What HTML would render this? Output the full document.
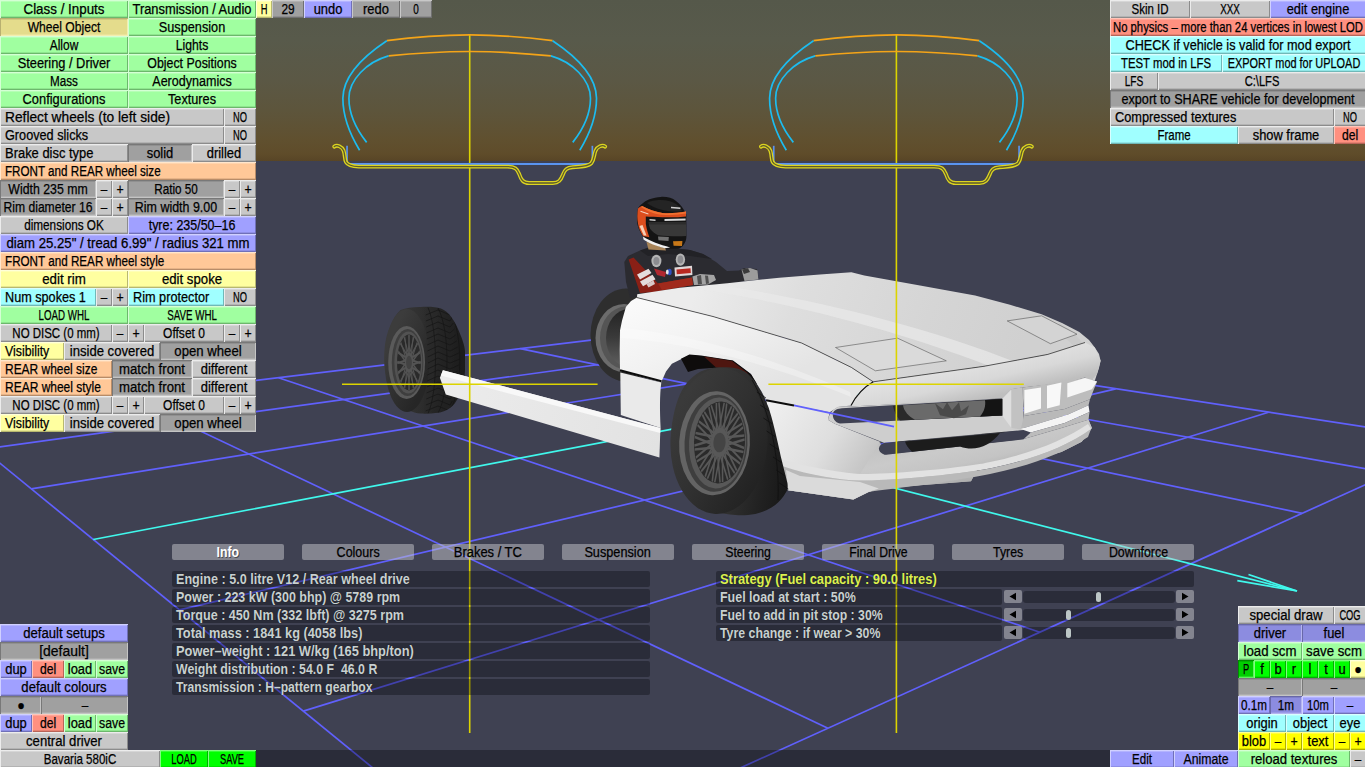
<!DOCTYPE html>
<html><head><meta charset="utf-8"><title>LFS Editor</title>
<style>
html,body{margin:0;padding:0;background:#3f4152;overflow:hidden}
body{width:1365px;height:767px;position:relative;font-family:"Liberation Sans",sans-serif;font-size:14px;line-height:18px;color:#000}
#sky{position:absolute;left:0;top:0;width:1365px;height:161px;background:linear-gradient(to bottom,#55584a 0px,#585a4b 40px,#5b5845 80px,#5d553c 110px,#60502f 140px,#5f4c2a 154px,#584526 161px)}
#ground{position:absolute;left:0;top:161px;width:1365px;height:606px;background:#3f4152}
#bar{position:absolute;left:0;top:750px;width:1365px;height:17px;background:rgba(0,0,6,0.32)}
svg#scene{position:absolute;left:0;top:0}
.b{position:absolute;box-sizing:border-box;text-align:center;white-space:nowrap;overflow:hidden;height:18px;-webkit-text-stroke:0.25px #000}
.b.l{text-align:left;padding-left:5px}
.s{display:inline-block;transform-origin:50% 50%}
.s.c{position:absolute;left:50%;top:0}
.b.l .s{transform-origin:0 50%}
.green{background:#a0ffa0;box-shadow:inset 1px 1px 0 #d4ffd4,inset -1px -1px 0 #6cb86c,inset 0 2px 0 #b5ffb5,inset 0 -2px 0 #8ee68e}
.sel{background:#e4dc8c;box-shadow:inset 1px 1px 0 #b8b070,inset -1px -1px 0 #f4eeb0,inset 0 2px 0 #d2ca81,inset 0 -2px 0 #eae299}
.gray{background:#c8c8c8;box-shadow:inset 1px 1px 0 #ececec,inset -1px -1px 0 #8c8c8c,inset 0 2px 0 #d6d6d6,inset 0 -2px 0 #b3b3b3}
.dgray{background:#a0a0a0;box-shadow:inset 1px 1px 0 #787878,inset -1px -1px 0 #c4c4c4,inset 0 2px 0 #909090,inset 0 -2px 0 #adadad}
.mgray{background:#a0a0a0;box-shadow:inset 1px 1px 0 #c8c8c8,inset -1px -1px 0 #707070,inset 0 2px 0 #b0b0b0,inset 0 -2px 0 #8f8f8f}
.orange{background:#ffc898;box-shadow:inset 1px 1px 0 #ffe6cc,inset -1px -1px 0 #b88c68,inset 0 2px 0 #ffd4ad,inset 0 -2px 0 #e6b387}
.blue{background:#a0a0ff;box-shadow:inset 1px 1px 0 #d0d0ff,inset -1px -1px 0 #7070b8,inset 0 2px 0 #b3b3ff,inset 0 -2px 0 #8f8fe6}
.dblue{background:#8c8ce0;box-shadow:inset 1px 1px 0 #6868a8,inset -1px -1px 0 #b4b4f0,inset 0 2px 0 #7e7eca,inset 0 -2px 0 #9a9ae6}
.yellow{background:#ffffa0;box-shadow:inset 1px 1px 0 #ffffd8,inset -1px -1px 0 #b8b870,inset 0 2px 0 #ffffb6,inset 0 -2px 0 #e6e68f}
.cyan{background:#a0ffff;box-shadow:inset 1px 1px 0 #d8ffff,inset -1px -1px 0 #70b8b8,inset 0 2px 0 #b6ffff,inset 0 -2px 0 #8fe6e6}
.red{background:#ff9080;box-shadow:inset 1px 1px 0 #ffc4b8,inset -1px -1px 0 #b86458,inset 0 2px 0 #ffa596,inset 0 -2px 0 #e68172}
.bgreen{background:#00ff00;box-shadow:inset 1px 1px 0 #80ff80,inset -1px -1px 0 #00b000,inset 0 2px 0 #33ff33,inset 0 -2px 0 #00e300}
.dgreen{background:#00d000;box-shadow:inset 1px 1px 0 #009000,inset -1px -1px 0 #60f060,inset 0 2px 0 #00b600,inset 0 -2px 0 #22db22}
.byellow{background:#ffff00;box-shadow:inset 1px 1px 0 #ffff90,inset -1px -1px 0 #b0b000,inset 0 2px 0 #ffff3a,inset 0 -2px 0 #e3e300}
.lyellow{background:#ffffa0;box-shadow:inset 1px 1px 0 #ffffd8,inset -1px -1px 0 #b8b870,inset 0 2px 0 #ffffb6,inset 0 -2px 0 #e6e68f}

</style></head><body>
<div id="sky"></div><div id="ground"></div>
<svg id="scene" width="1365" height="767" viewBox="0 0 1365 767">
<defs>
<linearGradient id="gHood" gradientUnits="userSpaceOnUse" x1="700" y1="280" x2="1000" y2="400">
 <stop offset="0" stop-color="#ececec"/><stop offset="0.3" stop-color="#dedede"/><stop offset="0.7" stop-color="#d5d5d5"/><stop offset="1" stop-color="#d0d0d0"/>
</linearGradient>
<linearGradient id="gFender" gradientUnits="userSpaceOnUse" x1="640" y1="300" x2="700" y2="420">
 <stop offset="0" stop-color="#fafafa"/><stop offset="0.45" stop-color="#f2f2f2"/><stop offset="1" stop-color="#e4e4e4"/>
</linearGradient>
<linearGradient id="gSide" gradientUnits="userSpaceOnUse" x1="770" y1="400" x2="880" y2="470">
 <stop offset="0" stop-color="#f0f0f0"/><stop offset="0.55" stop-color="#dedede"/><stop offset="1" stop-color="#bdbdbd"/>
</linearGradient>
<linearGradient id="gNose" gradientUnits="userSpaceOnUse" x1="900" y1="370" x2="910" y2="415">
 <stop offset="0" stop-color="#e6e6e6"/><stop offset="0.6" stop-color="#d8d8d8"/><stop offset="1" stop-color="#bebebe"/>
</linearGradient>
<linearGradient id="gBump" gradientUnits="userSpaceOnUse" x1="900" y1="430" x2="915" y2="495">
 <stop offset="0" stop-color="#bebebe"/><stop offset="0.45" stop-color="#cacaca"/><stop offset="0.7" stop-color="#c4c4c4"/><stop offset="1" stop-color="#acacac"/>
</linearGradient>
<linearGradient id="gTyreF" gradientUnits="userSpaceOnUse" x1="670" y1="440" x2="790" y2="460">
 <stop offset="0" stop-color="#3a3a3a"/><stop offset="0.55" stop-color="#303030"/><stop offset="0.8" stop-color="#222222"/><stop offset="1" stop-color="#181818"/>
</linearGradient>
<linearGradient id="gTyreR" gradientUnits="userSpaceOnUse" x1="384" y1="360" x2="466" y2="365">
 <stop offset="0" stop-color="#3c3c3c"/><stop offset="0.4" stop-color="#303030"/><stop offset="0.7" stop-color="#242424"/><stop offset="1" stop-color="#1c1c1c"/>
</linearGradient>
<linearGradient id="gInner" gradientUnits="userSpaceOnUse" x1="0" y1="300" x2="0" y2="375">
 <stop offset="0" stop-color="#1c1c1c"/><stop offset="0.5" stop-color="#3a3a3a"/><stop offset="1" stop-color="#6a6a6a"/>
</linearGradient>
<linearGradient id="gSill" gradientUnits="userSpaceOnUse" x1="440" y1="380" x2="660" y2="440">
 <stop offset="0" stop-color="#ececec"/><stop offset="1" stop-color="#e2e2e2"/>
</linearGradient>
<linearGradient id="gSideF" gradientUnits="userSpaceOnUse" x1="672" y1="420" x2="768" y2="470">
 <stop offset="0" stop-color="#3a3a3a"/><stop offset="0.5" stop-color="#303030"/><stop offset="1" stop-color="#222222"/>
</linearGradient>
<linearGradient id="gSideR" gradientUnits="userSpaceOnUse" x1="385" y1="350" x2="430" y2="372">
 <stop offset="0" stop-color="#3c3c3c"/><stop offset="0.5" stop-color="#313131"/><stop offset="1" stop-color="#262626"/>
</linearGradient>
<clipPath id="cpR"><path d="M420.8 306.9 C430 306.5 436 307 441 308.6 C449 312 454 320 458 329 C462 338 464.5 345 465 351 L465 371 C464 385 460 396 454.7 403.5 C450 409 444 412 437.8 412.8 C432 413.6 426 413.8 420.8 413.6 C412 413 405 409 400.5 403.5 C392 394 387 383 385.3 371.3 C384 364 384 357 384.4 351 C385 341 387 333 390.3 325.5 C393 319 396 314 400.5 310 C406 307.5 413 306.8 420.8 306.9 Z"/></clipPath>
</defs>

<g fill="none" stroke-width="1.7" stroke-linecap="butt">
<line x1="-55.5" y1="417.9" x2="503.9" y2="875.0" stroke="#6060fc"/>
<line x1="126.4" y1="396.0" x2="827.9" y2="728.2" stroke="#6060fc"/>
<line x1="278.5" y1="377.7" x2="1039.9" y2="632.2" stroke="#6060fc"/>
<line x1="520.4" y1="348.6" x2="1302.2" y2="513.3" stroke="#6060fc"/>
<line x1="620.4" y1="336.6" x2="1390.8" y2="473.2" stroke="#6060fc"/>
<line x1="707.2" y1="326.1" x2="1460.5" y2="441.6" stroke="#6060fc"/>
<line x1="-55.5" y1="417.9" x2="707.2" y2="326.1" stroke="#6060fc"/>
<line x1="-17.3" y1="449.2" x2="788.0" y2="338.5" stroke="#6060fc"/>
<line x1="31.2" y1="488.8" x2="881.2" y2="352.8" stroke="#6060fc"/>
<line x1="179.5" y1="609.9" x2="1115.7" y2="388.8" stroke="#6060fc"/>
<line x1="303.3" y1="711.1" x2="1268.6" y2="412.2" stroke="#6060fc"/>
<line x1="503.9" y1="875.0" x2="1460.5" y2="441.6" stroke="#6060fc"/>
<line x1="93.3" y1="539.5" x2="987.5" y2="369.1" stroke="#40f8ec"/>
<line x1="672" y1="431.1" x2="1297" y2="591" stroke="#40f8ec"/>
<path d="M1248.5 574.5 L1297 591 L1237.3 580.6" stroke="#40f8ec"/>
</g>
<g id="car">
<ellipse cx="626" cy="335" rx="35.5" ry="46.5" fill="#2e2e2e"/>
<ellipse cx="624" cy="338" rx="28.5" ry="34" fill="#6c6c6c"/>
<ellipse cx="626" cy="338" rx="26" ry="31.5" fill="#555"/>
<ellipse cx="629" cy="338" rx="23" ry="29" fill="url(#gInner)"/>
<path d="M420.8 306.9 C430 306.5 436 307 441 308.6 C449 312 454 320 458 329 C462 338 464.5 345 465 351 L465 371 C464 385 460 396 454.7 403.5 C450 409 444 412 437.8 412.8 C432 413.6 426 413.8 420.8 413.6 C412 413 405 409 400.5 403.5 C392 394 387 383 385.3 371.3 C384 364 384 357 384.4 351 C385 341 387 333 390.3 325.5 C393 319 396 314 400.5 310 C406 307.5 413 306.8 420.8 306.9 Z" fill="url(#gTyreR)"/>
<ellipse cx="407" cy="360.5" rx="22.5" ry="51.5" fill="url(#gSideR)"/>
<ellipse cx="406.6" cy="362.5" rx="18.4" ry="36.6" fill="#5a5a5a"/>
<ellipse cx="407.6" cy="362.5" rx="15.8" ry="33.6" fill="#3e3e3e"/>
<ellipse cx="408.4" cy="362.5" rx="14" ry="31" fill="#525252"/>
<g transform="translate(409.0 362.5) rotate(0.0) scale(12.000 28.000)"><circle r="1" fill="#2a2a2a"/><line x1="0.220" y1="0.000" x2="0.895" y2="0.400" stroke="#545454" stroke-width="0.080"/><line x1="0.220" y1="0.000" x2="0.895" y2="-0.400" stroke="#545454" stroke-width="0.080"/><line x1="0.203" y1="0.084" x2="0.674" y2="0.712" stroke="#545454" stroke-width="0.080"/><line x1="0.203" y1="0.084" x2="0.980" y2="-0.027" stroke="#545454" stroke-width="0.080"/><line x1="0.156" y1="0.156" x2="0.350" y2="0.915" stroke="#545454" stroke-width="0.080"/><line x1="0.156" y1="0.156" x2="0.915" y2="0.350" stroke="#545454" stroke-width="0.080"/><line x1="0.084" y1="0.203" x2="-0.027" y2="0.980" stroke="#545454" stroke-width="0.080"/><line x1="0.084" y1="0.203" x2="0.712" y2="0.674" stroke="#545454" stroke-width="0.080"/><line x1="0.000" y1="0.220" x2="-0.400" y2="0.895" stroke="#545454" stroke-width="0.080"/><line x1="0.000" y1="0.220" x2="0.400" y2="0.895" stroke="#545454" stroke-width="0.080"/><line x1="-0.084" y1="0.203" x2="-0.712" y2="0.674" stroke="#545454" stroke-width="0.080"/><line x1="-0.084" y1="0.203" x2="0.027" y2="0.980" stroke="#545454" stroke-width="0.080"/><line x1="-0.156" y1="0.156" x2="-0.915" y2="0.350" stroke="#545454" stroke-width="0.080"/><line x1="-0.156" y1="0.156" x2="-0.350" y2="0.915" stroke="#545454" stroke-width="0.080"/><line x1="-0.203" y1="0.084" x2="-0.980" y2="-0.027" stroke="#545454" stroke-width="0.080"/><line x1="-0.203" y1="0.084" x2="-0.674" y2="0.712" stroke="#545454" stroke-width="0.080"/><line x1="-0.220" y1="0.000" x2="-0.895" y2="-0.400" stroke="#545454" stroke-width="0.080"/><line x1="-0.220" y1="0.000" x2="-0.895" y2="0.400" stroke="#545454" stroke-width="0.080"/><line x1="-0.203" y1="-0.084" x2="-0.674" y2="-0.712" stroke="#545454" stroke-width="0.080"/><line x1="-0.203" y1="-0.084" x2="-0.980" y2="0.027" stroke="#545454" stroke-width="0.080"/><line x1="-0.156" y1="-0.156" x2="-0.350" y2="-0.915" stroke="#545454" stroke-width="0.080"/><line x1="-0.156" y1="-0.156" x2="-0.915" y2="-0.350" stroke="#545454" stroke-width="0.080"/><line x1="-0.084" y1="-0.203" x2="0.027" y2="-0.980" stroke="#545454" stroke-width="0.080"/><line x1="-0.084" y1="-0.203" x2="-0.712" y2="-0.674" stroke="#545454" stroke-width="0.080"/><line x1="-0.000" y1="-0.220" x2="0.400" y2="-0.895" stroke="#545454" stroke-width="0.080"/><line x1="-0.000" y1="-0.220" x2="-0.400" y2="-0.895" stroke="#545454" stroke-width="0.080"/><line x1="0.084" y1="-0.203" x2="0.712" y2="-0.674" stroke="#545454" stroke-width="0.080"/><line x1="0.084" y1="-0.203" x2="-0.027" y2="-0.980" stroke="#545454" stroke-width="0.080"/><line x1="0.156" y1="-0.156" x2="0.915" y2="-0.350" stroke="#545454" stroke-width="0.080"/><line x1="0.156" y1="-0.156" x2="0.350" y2="-0.915" stroke="#545454" stroke-width="0.080"/><line x1="0.203" y1="-0.084" x2="0.980" y2="0.027" stroke="#545454" stroke-width="0.080"/><line x1="0.203" y1="-0.084" x2="0.674" y2="-0.712" stroke="#545454" stroke-width="0.080"/><circle r="0.36" fill="#545454"/><circle r="0.24" fill="#424242"/></g>
<g stroke="#121212" stroke-width="0.7" fill="none" opacity="0.85" clip-path="url(#cpR)">
<path d="M425.6 315.0 L438.0 310.0 L450.0 315.0 L451.2 311.0"/>
<path d="M425.9 321.0 L438.0 316.0 L450.0 321.0 L452.3 317.0"/>
<path d="M426.2 327.0 L438.0 322.0 L450.0 327.0 L453.4 323.0"/>
<path d="M426.5 333.0 L438.0 328.0 L450.0 333.0 L454.5 329.0"/>
<path d="M426.8 339.0 L438.0 334.0 L450.0 339.0 L455.6 335.0"/>
<path d="M427.1 345.0 L438.0 340.0 L450.0 345.0 L456.7 341.0"/>
<path d="M427.4 351.0 L438.0 346.0 L450.0 351.0 L457.8 347.0"/>
<path d="M427.7 357.0 L438.0 352.0 L450.0 357.0 L458.9 353.0"/>
<path d="M428.0 363.0 L438.0 358.0 L450.0 363.0 L460.0 359.0"/>
<path d="M427.7 369.0 L438.0 364.0 L450.0 369.0 L458.9 365.0"/>
<path d="M427.4 375.0 L438.0 370.0 L450.0 375.0 L457.8 371.0"/>
<path d="M427.1 381.0 L438.0 376.0 L450.0 381.0 L456.7 377.0"/>
<path d="M426.8 387.0 L438.0 382.0 L450.0 387.0 L455.6 383.0"/>
<path d="M426.5 393.0 L438.0 388.0 L450.0 393.0 L454.5 389.0"/>
<path d="M426.2 399.0 L438.0 394.0 L450.0 399.0 L453.4 395.0"/>
<path d="M425.9 405.0 L438.0 400.0 L450.0 405.0 L452.3 401.0"/>
<path d="M425.6 411.0 L438.0 406.0 L450.0 411.0 L451.2 407.0"/>
<path d="M450 311 C463 332 463 390 450 410"/><path d="M438 308 C450 330 450 392 438 413"/><path d="M428 307.5 C438 330 438 392 428 413.5"/>
</g>
<ellipse cx="950" cy="418" rx="56" ry="62" fill="#262626"/>
<ellipse cx="944" cy="408" rx="44" ry="50" fill="#5a5a5a"/>
<ellipse cx="944" cy="406" rx="39" ry="45" fill="#707070"/>
<path d="M925 392 l10 -8 l3 9 l8 -9 l2 10 l9 -8 l-2 12 l9 -4 l-8 12 l-10 4 l-9 -3 l-6 -8 z" fill="#5c5c5c"/>
<g id="driver">
<!-- torso -->
<path d="M624.3 262 L628 256 L640 250.5 L652 246.5 L668 247.5 L690 250 L703 254 L716 262 L727 271 L739 270.5 L744 268 L757 269 L758.5 278 L745 281 L727 284 L680 288 L640 296 L630 298 L626 282 Z" fill="#2b2b30"/>
<path d="M640 250.5 L652 246.5 L668 247.5 L690 250 L703 254 L712 259 L690 256 L668 254 L648 256 Z" fill="#222226"/>
<path d="M628.6 259.5 L633.5 257.5 L658 283.5 L692 277.5 L693 285 L655 292 L640 293 Z" fill="#8a2016"/>
<path d="M658 283.5 L692 277.5 L693 285 L662 290 Z" fill="#a02a1c"/>
<path d="M637 274.5 L648.5 268.8 L651.5 273 L640 279.5 Z M640 281.5 L652.5 274.8 L655.5 279.2 L643 286.2 Z" fill="#e4dcdc"/>
<path d="M646.5 284 L653.5 280.5 L655 284 L648.5 287.5 Z" fill="#d8c8c8"/>
<ellipse cx="656.4" cy="261" rx="5" ry="6.2" fill="#b4b4b4"/><ellipse cx="656.4" cy="261" rx="3" ry="4" fill="#8c8c90"/>
<ellipse cx="680.4" cy="259.6" rx="4.7" ry="6.2" fill="#b4b4b4"/><ellipse cx="680.4" cy="259.6" rx="2.8" ry="4" fill="#8c8c90"/>
<path d="M674.5 267.5 L692 265.8 L692.4 275 L675 276.5 Z" fill="#e0d8d8"/>
<path d="M676.5 269.5 L690.5 268.2 L690.8 273 L676.8 274.3 Z" fill="#b82820"/>
<path d="M654 268.5 L666 272 L665 277 L657 275 Z" fill="#b02830"/>
<ellipse cx="669.5" cy="272" rx="2.2" ry="3.2" fill="#3050c0"/><ellipse cx="667.3" cy="272" rx="1.4" ry="2.6" fill="#e8e8e8"/>
<!-- gloves -->
<path d="M692.4 276.5 L700 274 L714 275 L716 280 L708 284.5 L694 285 Z" fill="#a4a4a4"/>
<path d="M697 276 L701 275 L702 284 L698 284.5 Z M705 275.5 L708 275.8 L709 283.5 L706 284 Z" fill="#505050"/>
<path d="M741.5 269.5 L750 268 L757.5 270.5 L758.4 279.5 L744.5 281 Z" fill="#9c9c9c"/>
<path d="M742 269.5 L748 268.3 L750 272 L744 274 Z" fill="#3a3a3a"/>
<!-- neck -->
<path d="M646.5 242 L664 245 L666 250.5 L648.5 249.5 Z" fill="#a88458"/>
<!-- helmet -->
<path d="M660.9 196.9 C667 196.6 672.4 198 676 201 C680 204 684 209 686.3 214.4 L686.4 237.3 C686.2 240 685.4 242.5 683.8 244.5 C682 247 680.5 248.2 678.1 248.8 L669.5 248.8 C665 248.5 660 247 656.6 245.2 C653 243.8 649.5 242.2 646.5 240.2 C643.5 237.5 641.5 234.5 640.1 231.6 C638.5 228.5 637.6 225.5 637.2 223 C636.9 221 636.9 219 637.2 217.2 C637.2 214 637.4 211 638 208.6 C638.8 206.8 640 205.4 641.5 204.3 C644 202 646.5 200.4 649.4 199.3 C653 197.8 657 197 660.9 196.9 Z" fill="#141414"/>
<path d="M647 203 C652 199.5 668 198 676 204 C679 206.5 681 209 682 211 C672 212.5 658 211 647 203 Z" fill="#242424"/>
<!-- orange band -->
<path d="M638 208.6 C639.5 207 641 206.3 642.2 206.1 C648 209.5 655 211.8 662.3 213 C670 213.6 678 212.9 686 211.5 L686 216.5 C678 217.4 670 217.5 662.3 217.2 C656 217 650 216.8 645.8 216.5 L645.8 223.7 C646.5 229 648 233.5 649.4 237.3 L643 235.9 C640.5 232 638.7 228 638 223.7 C637 219 637.2 213 638 208.6 Z" fill="#dc4e1e"/>
<path d="M642.2 206.1 C648 209.5 655 211.8 662.3 213 C670 213.6 678 212.9 686 211.5 L686 213.6 C678 215 670 215.4 662.3 214.8 C655 214 647 211.5 641 207 Z" fill="#f07030"/>
<!-- white text flecks on orange -->
<path d="M640.6 210.8 L648.5 213.4 L648.3 214.4 L640.4 211.8 Z" fill="#f4d8c8"/>
<path d="M639.5 226 L642.5 225 L646.5 235.5 L643.8 235.6 Z" fill="#f6d0b8"/>
<!-- black band + white text -->
<path d="M664.5 218.9 L685.6 218.4 L685.6 220.6 L664.5 221 Z" fill="#d8d8d8"/>
<path d="M671 206.8 L680.5 207.5 L680.3 209 L671 208.3 Z" fill="#cfcfcf"/>
<path d="M649.5 219 L655.5 219.5 L655.5 221 L649.5 220.6 Z" fill="#d0d0d0"/>
<!-- visor -->
<path d="M648.7 222.3 L686 222.3 L686.3 235.9 C677 236.6 667 236 658 235.2 C654.5 233.4 652 231.2 650.1 228.7 C649.2 226.5 648.8 224.4 648.7 222.3 Z" fill="#383838"/>
<path d="M648.7 222.3 L686 222.3 L686 224.6 L649 224.6 Z" fill="#2c2c2c"/>
<!-- white stripe -->
<path d="M643 236.6 C650 241 660 245 670.2 247.4 L665 248.2 C657 246.5 648 242.8 643.5 239.5 Z" fill="#f0f0f0"/>
<!-- chin logos -->
<path d="M658 236.5 L668.8 237 L668.5 240.9 L658.5 240.3 Z" fill="#707070"/>
<path d="M673 241.2 L682.4 240.9 L682 245.9 L673.6 245.7 Z" fill="#c87818"/>
</g>

<polygon points="637.2,294.3 679.7,287.7 727.3,283.2 779.4,277.7 820.0,274.4 851.4,272.2 864.3,275.5 920.0,285.4 975.1,295.4 1010.0,304.8 1041.6,314.3 1062.0,323.0 1079.3,332.0 1089.0,340.0 1094.8,347.5 1099.0,354.0 1100.6,360.8 1099.0,368.0 1097.0,374.0 1094.8,380.7 1085.0,377.0 1047.8,354.4 984.0,366.3 873.2,381.8 851.4,367.4 801.6,343.0 713.0,316.5 637.0,297.6" fill="url(#gHood)" />
<path d="M690 288 C780 300 900 330 1005 372 L1030 368 C930 326 800 296 716 285 Z" fill="#e9e9e9" opacity="0.7"/>
<path d="M1060 323 C1080 336 1092 350 1095 378 L1085 377 C1084 355 1072 340 1050 327 Z" fill="#cacaca" />
<polygon points="637.0,297.6 713.0,316.5 801.6,343.0 851.4,367.4 873.2,381.8 867.6,385.2 857.7,394.0 851.0,405.5 838.0,407.0 829.7,412.2 794.0,405.4 766.1,400.3 761.7,391.8 750.6,374.1 732.9,360.8 700.0,356.0 689.4,355.0 671.9,363.8 666.0,371.6 661.1,382.4 620.0,370.6 619.7,350.0 620.0,330.6 622.0,320.8 625.9,307.1 631.0,301.0" fill="url(#gFender)" />
<path d="M621 328 C680 333 760 352 850 392 L851 397 C760 360 680 342 620.5 338 Z" fill="#ffffff" opacity="0.3"/>
<path d="M620.3 372.4 L661.3 382.6 C659.6 396 659.8 410 660.6 428 L620.8 415 Z" fill="#eaeaea" />
<path d="M681 358.8 L689.4 354.6 L701 355.6 L733 360.6 L751 374 L757 384 L735 372 L712 368 L698 369 L688 372 Z" fill="#0e0c0c" />
<path d="M704 356.4 L732 361 L747 372.5 L752 381 L736 371 L716 367.5 Z" fill="#4e1610" />
<polygon points="873.2,381.8 984.0,366.3 1047.8,354.4 1085.0,342.5 1094.8,347.5 1100.6,360.8 1097.0,374.0 1091.0,381.0 1085.0,377.5 1067.3,382.5 1022.4,387.5 1011.4,389.2 1002.6,398.2 920.0,403.0 850.0,406.5 838.1,406.8 851.0,405.5 857.7,394.0 867.6,385.2" fill="url(#gNose)" />
<polygon points="766.1,400.3 794.0,405.4 829.7,412.2 828.0,419.8 834.7,423.7 880.0,441.8 877.5,447.8 883.9,454.6 1023.7,439.0 1061.4,428.0 1088.5,419.7 1091.9,428.1 1081.7,441.7 1061.4,451.9 1030.0,460.0 980.0,463.7 971.0,481.3 878.8,488.5 868.6,491.9 853.4,499.5 788.1,490.2 786.4,485.1 778.8,454.6 772.0,427.5" fill="url(#gSide)" />
<path d="M880 441.8 L884 455 L1023.7 439.5 L1061.4 428.5 L1088.5 420 L1091.9 428.1 L1081.7 441.7 L1061.4 451.9 L1030 460 L980 464 L971 481.3 L878.8 488.5 L868.6 491.9 L860 474 Z" fill="url(#gBump)" />
<path d="M780.5 458.8 C795 464 808 466 817.8 468.1 C835 471.5 850 473.5 860.2 474 C880 474.5 950 470 990 462 C1030 454 1065 440 1088 424 L1091 429 C1068 446 1032 460 992 468 C950 476 880 481 859 480.6 C840 480 812 476 782 466 Z" fill="#e2e2e2" />
<path d="M782 466 C812 476 840 480 859 480.6 C880 481 950 476 992 468 C1032 460 1068 446 1091 429 L1088 437 C1066 452 1030 466 990 474 C950 482 890 489 868.6 491.9 L853.4 499.5 L788.1 490.2 Z" fill="#b9b9b9" />
<path d="M853.4 499.5 L868.6 491.9 L878.8 488.5 L860 482 L800 476 L786 470 L788.1 490.2 Z" fill="#dadada" />
<path d="M828 419.8 C829 414 833 409 838.1 406.8 L850 406.5 L1002.6 398.2 L1011.4 389.2 L1022.4 387.5 L1024 430 L884 442.7 L834.7 423.7 Z" fill="#cecece" />
<path d="M833 413 C834 410 838 408.5 842 408.3 L1002.6 398.4 L1002.6 415.4 L840 423.4 C835 422.6 832 418 833 413 Z" fill="#3f4152" />
<path d="M893 406 L1002.6 399 L1002.6 415.4 L900 420.6 C896 416 894 411 893 406 Z" fill="#2a2a2a" />
<path d="M903 405.3 L990 400 C990 406 986 412 980 416.5 L915 419.8 C908 416 904 411 903 405.3 Z" fill="#6a6a6a" />
<path d="M935 403.3 l8 6 l4 -7 l5 8 l7 -8 l2 9 l8 -6 l-3 9 l-12 4 l-14 -3 z" fill="#4a4a4a" />
<path d="M985 400 L1002.6 399 L1002.6 415.4 L980 416.5 C984 412 986 406 985 400Z" fill="#141414" />
<line x1="794" y1="405.4" x2="894" y2="426.6" stroke="#6060fc" stroke-width="1.7"/>
<path d="M1002.6 398.2 L1011.4 389.2 L1011.4 428 L1002.6 416 Z" fill="#dedede" />
<path d="M1011.4 389.2 L1022.4 387.5 L1023.7 430 L1011.4 428 Z" fill="#c2c2c2" />
<path d="M879 448 C879.5 445 882 443.2 886 442.7 L1023.7 430.5 L1030.8 432.4 L1023.7 439.3 L886 454.8 C881 454 878.5 451 879 448 Z" fill="#3f4152" />
<path d="M905 441.5 L1000 433 C990 446 975 452 960 446.5 L912 451.8 C908 448 906 445 905 441.5Z" fill="#1c1c1c" />
<path d="M1022.4 387.5 L1067.3 381.5 L1085 377.5 L1097 381.5 L1090 399.3 L1064.7 409 L1024 416 Z" fill="#bdbdbd" />
<path d="M1024.4 390 L1041 387.5 L1041 408.6 L1024.4 413.7 Z" fill="#f8f8f8" />
<path d="M1047 385.8 L1061.4 382.4 L1059.7 405.3 L1047 408.6 Z" fill="#f8f8f8" />
<path d="M1067.3 383.2 L1085 378.1 L1097 381.5 L1091.9 389.2 L1067.3 397.6 Z" fill="#f6f6f6" />
<path d="M1024 416 L1064.7 409 L1090 399.3 L1088.5 405.3 L1068 414.6 L1020.7 429 Z" fill="#b9b9b9" />
<path d="M1020.7 429 L1068 414.6 L1088.5 405.3 L1089.5 412 L1064.7 423 L1030.8 432.4 Z" fill="#f4f4f4" />
<path d="M1030.8 432.4 L1064.7 423 L1089.5 412 L1088.5 419.7 L1061.4 428 L1023.7 439 Z" fill="#bcbcbc" />
<path d="M637 297.6 L713 316.5 L801.6 343 L851.4 367.4 L873.2 381.8" fill="none" stroke="#3a3a3a" stroke-width="0.8"/>
<path d="M873.2 381.8 C866 386 857 394 851 405.5" fill="none" stroke="#111" stroke-width="1.2"/>
<path d="M873.2 381.8 L984 366.3 L1047.8 354.4 L1085 342.5" fill="none" stroke="#333" stroke-width="0.8"/>
<path d="M835.5 347.5 L897.6 338.2 L946.3 360.8 L875.4 370.8 Z" fill="#dadada" stroke="#555" stroke-width="0.6"/>
<path d="M1007.2 320.9 L1041.6 315.8 L1077 334.2 L1050.4 343.7 Z" fill="#d4d4d4" stroke="#555" stroke-width="0.6"/>
<path d="M620 370.2 L661.5 381.2" fill="none" stroke="#0c0c0c" stroke-width="2.2"/>
<path d="M766.1 400.3 L794 405.4" fill="none" stroke="#0c0c0c" stroke-width="2"/>
<path d="M726.5 367.3 C738 367.5 746 371 751 377 C757 383 763 394 768.6 407.6 C772 418 776 434 780.8 456.4 L787.4 483 C788 487 787.5 490 786.3 491.8 C783 498 779 502 775.2 505.1 C769 509.5 762 512.5 755.3 514 C748 515.3 741 515.5 735.3 515 C728 514.5 721 513.5 715.4 511.8 C708 508 702 504 697.7 498.5 C691 492 686 484 682.2 476.3 C678 468 675 461 673.3 454.1 C671.5 447 671 443 671 438.6 C671 431 672 423 673.3 416.5 C675 408 677 401 680 394.3 C684 386 688 381 693.2 376.6 C698 372.5 703 370 708.7 368.8 C714 367.5 720 367.2 726.5 367.3 Z" fill="url(#gTyreF)"/>
<ellipse cx="719" cy="441" rx="48.5" ry="73" transform="rotate(3 719 441)" fill="url(#gSideF)"/>
<ellipse cx="714.5" cy="443.3" rx="35.4" ry="52" transform="rotate(3 714.5 443.3)" fill="#646464"/>
<ellipse cx="716" cy="443.3" rx="31.5" ry="48.5" transform="rotate(3 716 443.3)" fill="#3e3e3e"/>
<ellipse cx="717.5" cy="443" rx="28.5" ry="45.5" transform="rotate(3 717.5 443)" fill="#585858"/>
<g transform="translate(719.5 442.5) rotate(3.0) scale(25.500 41.000)"><circle r="1" fill="#2a2a2a"/><line x1="0.220" y1="0.000" x2="0.895" y2="0.400" stroke="#585858" stroke-width="0.060"/><line x1="0.220" y1="0.000" x2="0.895" y2="-0.400" stroke="#585858" stroke-width="0.060"/><line x1="0.209" y1="0.068" x2="0.728" y2="0.657" stroke="#585858" stroke-width="0.060"/><line x1="0.209" y1="0.068" x2="0.975" y2="-0.104" stroke="#585858" stroke-width="0.060"/><line x1="0.178" y1="0.129" x2="0.489" y2="0.849" stroke="#585858" stroke-width="0.060"/><line x1="0.178" y1="0.129" x2="0.959" y2="0.203" stroke="#585858" stroke-width="0.060"/><line x1="0.129" y1="0.178" x2="0.203" y2="0.959" stroke="#585858" stroke-width="0.060"/><line x1="0.129" y1="0.178" x2="0.849" y2="0.489" stroke="#585858" stroke-width="0.060"/><line x1="0.068" y1="0.209" x2="-0.104" y2="0.975" stroke="#585858" stroke-width="0.060"/><line x1="0.068" y1="0.209" x2="0.657" y2="0.728" stroke="#585858" stroke-width="0.060"/><line x1="0.000" y1="0.220" x2="-0.400" y2="0.895" stroke="#585858" stroke-width="0.060"/><line x1="0.000" y1="0.220" x2="0.400" y2="0.895" stroke="#585858" stroke-width="0.060"/><line x1="-0.068" y1="0.209" x2="-0.657" y2="0.728" stroke="#585858" stroke-width="0.060"/><line x1="-0.068" y1="0.209" x2="0.104" y2="0.975" stroke="#585858" stroke-width="0.060"/><line x1="-0.129" y1="0.178" x2="-0.849" y2="0.489" stroke="#585858" stroke-width="0.060"/><line x1="-0.129" y1="0.178" x2="-0.203" y2="0.959" stroke="#585858" stroke-width="0.060"/><line x1="-0.178" y1="0.129" x2="-0.959" y2="0.203" stroke="#585858" stroke-width="0.060"/><line x1="-0.178" y1="0.129" x2="-0.489" y2="0.849" stroke="#585858" stroke-width="0.060"/><line x1="-0.209" y1="0.068" x2="-0.975" y2="-0.104" stroke="#585858" stroke-width="0.060"/><line x1="-0.209" y1="0.068" x2="-0.728" y2="0.657" stroke="#585858" stroke-width="0.060"/><line x1="-0.220" y1="0.000" x2="-0.895" y2="-0.400" stroke="#585858" stroke-width="0.060"/><line x1="-0.220" y1="0.000" x2="-0.895" y2="0.400" stroke="#585858" stroke-width="0.060"/><line x1="-0.209" y1="-0.068" x2="-0.728" y2="-0.657" stroke="#585858" stroke-width="0.060"/><line x1="-0.209" y1="-0.068" x2="-0.975" y2="0.104" stroke="#585858" stroke-width="0.060"/><line x1="-0.178" y1="-0.129" x2="-0.489" y2="-0.849" stroke="#585858" stroke-width="0.060"/><line x1="-0.178" y1="-0.129" x2="-0.959" y2="-0.203" stroke="#585858" stroke-width="0.060"/><line x1="-0.129" y1="-0.178" x2="-0.203" y2="-0.959" stroke="#585858" stroke-width="0.060"/><line x1="-0.129" y1="-0.178" x2="-0.849" y2="-0.489" stroke="#585858" stroke-width="0.060"/><line x1="-0.068" y1="-0.209" x2="0.104" y2="-0.975" stroke="#585858" stroke-width="0.060"/><line x1="-0.068" y1="-0.209" x2="-0.657" y2="-0.728" stroke="#585858" stroke-width="0.060"/><line x1="-0.000" y1="-0.220" x2="0.400" y2="-0.895" stroke="#585858" stroke-width="0.060"/><line x1="-0.000" y1="-0.220" x2="-0.400" y2="-0.895" stroke="#585858" stroke-width="0.060"/><line x1="0.068" y1="-0.209" x2="0.657" y2="-0.728" stroke="#585858" stroke-width="0.060"/><line x1="0.068" y1="-0.209" x2="-0.104" y2="-0.975" stroke="#585858" stroke-width="0.060"/><line x1="0.129" y1="-0.178" x2="0.849" y2="-0.489" stroke="#585858" stroke-width="0.060"/><line x1="0.129" y1="-0.178" x2="0.203" y2="-0.959" stroke="#585858" stroke-width="0.060"/><line x1="0.178" y1="-0.129" x2="0.959" y2="-0.203" stroke="#585858" stroke-width="0.060"/><line x1="0.178" y1="-0.129" x2="0.489" y2="-0.849" stroke="#585858" stroke-width="0.060"/><line x1="0.209" y1="-0.068" x2="0.975" y2="0.104" stroke="#585858" stroke-width="0.060"/><line x1="0.209" y1="-0.068" x2="0.728" y2="-0.657" stroke="#585858" stroke-width="0.060"/><circle r="0.36" fill="#585858"/><circle r="0.24" fill="#444444"/></g>
<g stroke="#0e0e0e" stroke-width="0.9" fill="none" opacity="0.8">
<path d="M752 380 C770 410 780 460 778 500"/>
<path d="M757.0 392.0 l9 6"/>
<path d="M760.2 405.0 l9 6"/>
<path d="M763.4 418.0 l9 6"/>
<path d="M766.6 431.0 l9 6"/>
<path d="M769.8 444.0 l9 6"/>
<path d="M773.0 457.0 l9 6"/>
<path d="M776.2 470.0 l9 6"/>
<path d="M779.4 483.0 l9 6"/>
</g>
<polygon points="442.9,370.2 660.4,428.1 659.4,457.4 445.8,394.5 439.9,377.7" fill="url(#gSill)" />
<polygon points="442.9,370.2 660.4,428.1 660.2,432.9 440.9,375.6" fill="#f8f8f8" />
</g>
<g stroke="#dcd400" stroke-width="1.6" fill="none">
<line x1="469.7" y1="35" x2="469.7" y2="733"/>
<line x1="896.4" y1="35" x2="896.4" y2="733"/>
<line x1="342" y1="384.3" x2="597.6" y2="384.3"/>
<line x1="768.4" y1="384.3" x2="1023.8" y2="384.3"/>
</g>
<g transform="translate(469.7 0) scale(0.99 1)" fill="none" stroke-width="1.7"><path d="M-83.7 40.7 Q-40 35 0 34.9 Q40 35 83.7 40.7" stroke="#f4a418"/><path d="M-82 55.9 Q-40 51.6 0 51.5 Q40 51.6 82 55.9" stroke="#f4a418"/><path d="M-83.7 40.7 C-110.0 58 -128.0 78 -128.1 98.3 C-128.1 118 -120.0 136 -111.2 150.2" stroke="#1cbcf0"/><path d="M-82.0 55.9 C-104.0 62 -122.0 80 -122.0 98.3 C-122.0 114 -114.0 130 -104.1 142.4" stroke="#1cbcf0"/><line x1="-123.9" y1="145.8" x2="-123.9" y2="163" stroke="#5a94f0"/><path d="M83.7 40.7 C110.0 58 128.0 78 128.1 98.3 C128.1 118 120.0 136 111.2 150.2" stroke="#1cbcf0"/><path d="M82.0 55.9 C104.0 62 122.0 80 122.0 98.3 C122.0 114 114.0 130 104.1 142.4" stroke="#1cbcf0"/><line x1="123.9" y1="145.8" x2="123.9" y2="163" stroke="#5a94f0"/><line x1="-123.9" y1="164" x2="123.9" y2="164" stroke="#5a94f0" stroke-width="2"/><path d="M-136.8 146.6 C-134 144.5 -129 146.5 -127.3 150.8 C-125.8 155 -126.5 159 -125 162 C-123 165.5 -119 166.4 -112 166.6 L38 166.6 C46 166.6 48 169 50 174 C52 180 54 183 60 183 L84 183 C90 183 92 180 94 175 C96 169.5 98 167.8 104 167.2 C112 166.6 120 166.6 123 163 C126 159 125.4 155 127.1 150.8 C128.8 146.5 134 144.5 136.8 146.6" stroke="#dcd420" stroke-width="3.9" stroke-linejoin="round" stroke-linecap="round"/><path d="M-136.8 146.6 C-134 144.5 -129 146.5 -127.3 150.8 C-125.8 155 -126.5 159 -125 162 C-123 165.5 -119 166.4 -112 166.6 L38 166.6 C46 166.6 48 169 50 174 C52 180 54 183 60 183 L84 183 C90 183 92 180 94 175 C96 169.5 98 167.8 104 167.2 C112 166.6 120 166.6 123 163 C126 159 125.4 155 127.1 150.8 C128.8 146.5 134 144.5 136.8 146.6" stroke="#55532c" stroke-width="1.3" stroke-linejoin="round" stroke-linecap="round" opacity="0.95"/></g>
<g transform="translate(896.4 0) scale(0.99 1)" fill="none" stroke-width="1.7"><path d="M-83.7 40.7 Q-40 35 0 34.9 Q40 35 83.7 40.7" stroke="#f4a418"/><path d="M-82 55.9 Q-40 51.6 0 51.5 Q40 51.6 82 55.9" stroke="#f4a418"/><path d="M-83.7 40.7 C-110.0 58 -128.0 78 -128.1 98.3 C-128.1 118 -120.0 136 -111.2 150.2" stroke="#1cbcf0"/><path d="M-82.0 55.9 C-104.0 62 -122.0 80 -122.0 98.3 C-122.0 114 -114.0 130 -104.1 142.4" stroke="#1cbcf0"/><line x1="-123.9" y1="145.8" x2="-123.9" y2="163" stroke="#5a94f0"/><path d="M83.7 40.7 C110.0 58 128.0 78 128.1 98.3 C128.1 118 120.0 136 111.2 150.2" stroke="#1cbcf0"/><path d="M82.0 55.9 C104.0 62 122.0 80 122.0 98.3 C122.0 114 114.0 130 104.1 142.4" stroke="#1cbcf0"/><line x1="123.9" y1="145.8" x2="123.9" y2="163" stroke="#5a94f0"/><line x1="-123.9" y1="164" x2="123.9" y2="164" stroke="#5a94f0" stroke-width="2"/><path d="M-136.8 146.6 C-134 144.5 -129 146.5 -127.3 150.8 C-125.8 155 -126.5 159 -125 162 C-123 165.5 -119 166.4 -112 166.6 L38 166.6 C46 166.6 48 169 50 174 C52 180 54 183 60 183 L84 183 C90 183 92 180 94 175 C96 169.5 98 167.8 104 167.2 C112 166.6 120 166.6 123 163 C126 159 125.4 155 127.1 150.8 C128.8 146.5 134 144.5 136.8 146.6" stroke="#dcd420" stroke-width="3.9" stroke-linejoin="round" stroke-linecap="round"/><path d="M-136.8 146.6 C-134 144.5 -129 146.5 -127.3 150.8 C-125.8 155 -126.5 159 -125 162 C-123 165.5 -119 166.4 -112 166.6 L38 166.6 C46 166.6 48 169 50 174 C52 180 54 183 60 183 L84 183 C90 183 92 180 94 175 C96 169.5 98 167.8 104 167.2 C112 166.6 120 166.6 123 163 C126 159 125.4 155 127.1 150.8 C128.8 146.5 134 144.5 136.8 146.6" stroke="#55532c" stroke-width="1.3" stroke-linejoin="round" stroke-linecap="round" opacity="0.95"/></g>
</svg>
<div id="bar"></div>
<style>
.tab{position:absolute;top:544px;width:112px;height:16px;line-height:16px;text-align:center;background:rgba(200,200,204,0.5);border-radius:2px;color:#000;font-size:14px;-webkit-text-stroke:0.25px #000}
.ts{display:inline-block}
.tab.tsel{color:#fff;font-weight:bold;font-size:14px;-webkit-text-stroke:0;text-shadow:1px 1px 0 rgba(0,0,0,0.45)}
.row{position:absolute;height:16px;line-height:17px;box-sizing:border-box;padding-left:4px;background:rgba(0,0,6,0.32);border-radius:2px;color:#c8d0d0;font-weight:bold;font-size:14px;white-space:nowrap;text-shadow:0 0 1px rgba(0,0,0,0.6)}
.row.strat{color:#dcf050}
.rs{display:inline-block;transform-origin:0 50%}
.arr{position:absolute;width:18px;height:13px;background:rgba(200,200,204,0.5);border-radius:2px}
.arr svg{display:block}
.trk{position:absolute;width:152px;height:12px;background:rgba(0,0,6,0.32);border-radius:3px}
.knob{position:absolute;width:5px;height:10px;background:#bcc6c6;border-radius:2.5px}
</style>
<div class="tab tsel" style="left:172px"><span class="ts" style="transform:scaleX(0.8770)">Info</span></div>
<div class="tab" style="left:302px"><span class="ts" style="transform:scaleX(0.8912)">Colours</span></div>
<div class="tab" style="left:432px"><span class="ts" style="transform:scaleX(0.9246)">Brakes / TC</span></div>
<div class="tab" style="left:562px"><span class="ts" style="transform:scaleX(0.9075)">Suspension</span></div>
<div class="tab" style="left:692px"><span class="ts" style="transform:scaleX(0.8768)">Steering</span></div>
<div class="tab" style="left:822px"><span class="ts" style="transform:scaleX(0.8701)">Final Drive</span></div>
<div class="tab" style="left:952px"><span class="ts" style="transform:scaleX(0.8797)">Tyres</span></div>
<div class="tab" style="left:1082px"><span class="ts" style="transform:scaleX(0.8841)">Downforce</span></div>
<div class="row" style="left:172px;top:571px;width:478px"><span class="rs" style="transform:scaleX(0.8996)">Engine : 5.0 litre V12 / Rear wheel drive</span></div>
<div class="row" style="left:172px;top:589px;width:478px"><span class="rs" style="transform:scaleX(0.8906)">Power : 223 kW (300 bhp) @ 5789 rpm</span></div>
<div class="row" style="left:172px;top:607px;width:478px"><span class="rs" style="transform:scaleX(0.8984)">Torque : 450 Nm (332 lbft) @ 3275 rpm</span></div>
<div class="row" style="left:172px;top:625px;width:478px"><span class="rs" style="transform:scaleX(0.9120)">Total mass : 1841 kg (4058 lbs)</span></div>
<div class="row" style="left:172px;top:643px;width:478px"><span class="rs" style="transform:scaleX(0.9180)">Power–weight : 121 W/kg (165 bhp/ton)</span></div>
<div class="row" style="left:172px;top:661px;width:478px"><span class="rs" style="transform:scaleX(0.8812)">Weight distribution : 54.0 F  46.0 R</span></div>
<div class="row" style="left:172px;top:679px;width:478px"><span class="rs" style="transform:scaleX(0.8679)">Transmission : H–pattern gearbox</span></div>
<div class="row strat" style="left:716px;top:571px;width:478px"><span class="rs" style="transform:scaleX(0.9222)">Strategy (Fuel capacity : 90.0 litres)</span></div>
<div class="row" style="left:716px;top:589px;width:286px"><span class="rs" style="transform:scaleX(0.8906)">Fuel load at start : 50%</span></div>
<div class="arr" style="left:1004px;top:590px"><svg width="18" height="13" viewBox="0 0 18 13"><path d="M5.5 6.5 L12 2.8 L12 10.2 Z" fill="#000"/></svg></div>
<div class="trk" style="left:1023px;top:591px"></div>
<div class="knob" style="left:1095.5px;top:592px"></div>
<div class="arr" style="left:1176px;top:590px"><svg width="18" height="13" viewBox="0 0 18 13"><path d="M12.5 6.5 L6 2.8 L6 10.2 Z" fill="#000"/></svg></div>
<div class="row" style="left:716px;top:607px;width:286px"><span class="rs" style="transform:scaleX(0.8747)">Fuel to add in pit stop : 30%</span></div>
<div class="arr" style="left:1004px;top:608px"><svg width="18" height="13" viewBox="0 0 18 13"><path d="M5.5 6.5 L12 2.8 L12 10.2 Z" fill="#000"/></svg></div>
<div class="trk" style="left:1023px;top:609px"></div>
<div class="knob" style="left:1066.0px;top:610px"></div>
<div class="arr" style="left:1176px;top:608px"><svg width="18" height="13" viewBox="0 0 18 13"><path d="M12.5 6.5 L6 2.8 L6 10.2 Z" fill="#000"/></svg></div>
<div class="row" style="left:716px;top:625px;width:286px"><span class="rs" style="transform:scaleX(0.8803)">Tyre change : if wear &gt; 30%</span></div>
<div class="arr" style="left:1004px;top:626px"><svg width="18" height="13" viewBox="0 0 18 13"><path d="M5.5 6.5 L12 2.8 L12 10.2 Z" fill="#000"/></svg></div>
<div class="trk" style="left:1023px;top:627px"></div>
<div class="knob" style="left:1066.0px;top:628px"></div>
<div class="arr" style="left:1176px;top:626px"><svg width="18" height="13" viewBox="0 0 18 13"><path d="M12.5 6.5 L6 2.8 L6 10.2 Z" fill="#000"/></svg></div>
<div class="b green" style="left:0px;top:0px;width:128px;height:18px;"><span class="s c" style="transform:translateX(-50%) scaleX(0.9549)">Class / Inputs</span></div>
<div class="b green" style="left:128px;top:0px;width:128px;height:18px;"><span class="s c" style="transform:translateX(-50%) scaleX(0.9194)">Transmission / Audio</span></div>
<div class="b yellow" style="left:256px;top:0px;width:16px;height:18px;"><span class="s c" style="transform:translateX(-50%) scaleX(0.6650)">H</span></div>
<div class="b mgray" style="left:272px;top:0px;width:32px;height:18px;"><span class="s c" style="transform:translateX(-50%) scaleX(0.8473)">29</span></div>
<div class="b blue" style="left:304px;top:0px;width:48px;height:18px;"><span class="s c" style="transform:translateX(-50%) scaleX(0.9227)">undo</span></div>
<div class="b mgray" style="left:352px;top:0px;width:48px;height:18px;"><span class="s c" style="transform:translateX(-50%) scaleX(0.9231)">redo</span></div>
<div class="b mgray" style="left:400px;top:0px;width:32px;height:18px;"><span class="s c" style="transform:translateX(-50%) scaleX(0.7126)">0</span></div>
<div class="b sel" style="left:0px;top:18px;width:128px;height:18px;"><span class="s c" style="transform:translateX(-50%) scaleX(0.8641)">Wheel Object</span></div>
<div class="b green" style="left:128px;top:18px;width:128px;height:18px;"><span class="s c" style="transform:translateX(-50%) scaleX(0.9075)">Suspension</span></div>
<div class="b green" style="left:0px;top:36px;width:128px;height:18px;"><span class="s c" style="transform:translateX(-50%) scaleX(0.8512)">Allow</span></div>
<div class="b green" style="left:128px;top:36px;width:128px;height:18px;"><span class="s c" style="transform:translateX(-50%) scaleX(0.8697)">Lights</span></div>
<div class="b green" style="left:0px;top:54px;width:128px;height:18px;"><span class="s c" style="transform:translateX(-50%) scaleX(0.9158)">Steering / Driver</span></div>
<div class="b green" style="left:128px;top:54px;width:128px;height:18px;"><span class="s c" style="transform:translateX(-50%) scaleX(0.8840)">Object Positions</span></div>
<div class="b green" style="left:0px;top:72px;width:128px;height:18px;"><span class="s c" style="transform:translateX(-50%) scaleX(0.8336)">Mass</span></div>
<div class="b green" style="left:128px;top:72px;width:128px;height:18px;"><span class="s c" style="transform:translateX(-50%) scaleX(0.8960)">Aerodynamics</span></div>
<div class="b green" style="left:0px;top:90px;width:128px;height:18px;"><span class="s c" style="transform:translateX(-50%) scaleX(0.9171)">Configurations</span></div>
<div class="b green" style="left:128px;top:90px;width:128px;height:18px;"><span class="s c" style="transform:translateX(-50%) scaleX(0.9086)">Textures</span></div>
<div class="b gray l" style="left:0px;top:108px;width:224px;height:18px;"><span class="s" style="transform:scaleX(0.9817)">Reflect wheels (to left side)</span></div>
<div class="b gray" style="left:224px;top:108px;width:32px;height:18px;"><span class="s c" style="transform:translateX(-50%) scaleX(0.6667)">NO</span></div>
<div class="b gray l" style="left:0px;top:126px;width:224px;height:18px;"><span class="s" style="transform:scaleX(0.9062)">Grooved slicks</span></div>
<div class="b gray" style="left:224px;top:126px;width:32px;height:18px;"><span class="s c" style="transform:translateX(-50%) scaleX(0.6667)">NO</span></div>
<div class="b gray l" style="left:0px;top:144px;width:128px;height:18px;"><span class="s" style="transform:scaleX(0.9240)">Brake disc type</span></div>
<div class="b dgray" style="left:128px;top:144px;width:64px;height:18px;"><span class="s c" style="transform:translateX(-50%) scaleX(0.9233)">solid</span></div>
<div class="b gray" style="left:192px;top:144px;width:64px;height:18px;"><span class="s c" style="transform:translateX(-50%) scaleX(0.9229)">drilled</span></div>
<div class="b orange l" style="left:0px;top:162px;width:256px;height:18px;"><span class="s" style="transform:scaleX(0.8313)">FRONT and REAR wheel size</span></div>
<div class="b dgray" style="left:0px;top:180px;width:96px;height:18px;"><span class="s c" style="transform:translateX(-50%) scaleX(0.8787)">Width 235 mm</span></div>
<div class="b gray" style="left:96px;top:180px;width:16px;height:18px;"><span class="s c" style="transform:translateX(-50%) scaleX(0.8337)">–</span></div>
<div class="b gray" style="left:112px;top:180px;width:16px;height:18px;"><span class="s c" style="transform:translateX(-50%) scaleX(0.8794)">+</span></div>
<div class="b dgray" style="left:128px;top:180px;width:96px;height:18px;"><span class="s c" style="transform:translateX(-50%) scaleX(0.8346)">Ratio 50</span></div>
<div class="b gray" style="left:224px;top:180px;width:16px;height:18px;"><span class="s c" style="transform:translateX(-50%) scaleX(0.8337)">–</span></div>
<div class="b gray" style="left:240px;top:180px;width:16px;height:18px;"><span class="s c" style="transform:translateX(-50%) scaleX(0.8794)">+</span></div>
<div class="b dgray" style="left:0px;top:198px;width:96px;height:18px;"><span class="s c" style="transform:translateX(-50%) scaleX(0.8666)">Rim diameter 16</span></div>
<div class="b gray" style="left:96px;top:198px;width:16px;height:18px;"><span class="s c" style="transform:translateX(-50%) scaleX(0.8337)">–</span></div>
<div class="b gray" style="left:112px;top:198px;width:16px;height:18px;"><span class="s c" style="transform:translateX(-50%) scaleX(0.8794)">+</span></div>
<div class="b dgray" style="left:128px;top:198px;width:96px;height:18px;"><span class="s c" style="transform:translateX(-50%) scaleX(0.8884)">Rim width 9.00</span></div>
<div class="b gray" style="left:224px;top:198px;width:16px;height:18px;"><span class="s c" style="transform:translateX(-50%) scaleX(0.8337)">–</span></div>
<div class="b gray" style="left:240px;top:198px;width:16px;height:18px;"><span class="s c" style="transform:translateX(-50%) scaleX(0.8794)">+</span></div>
<div class="b gray" style="left:0px;top:216px;width:128px;height:18px;"><span class="s c" style="transform:translateX(-50%) scaleX(0.8395)">dimensions OK</span></div>
<div class="b blue" style="left:128px;top:216px;width:128px;height:18px;"><span class="s c" style="transform:translateX(-50%) scaleX(0.8908)">tyre: 235/50–16</span></div>
<div class="b blue" style="left:0px;top:234px;width:256px;height:18px;"><span class="s c" style="transform:translateX(-50%) scaleX(0.9412)">diam 25.25&quot; / tread 6.99&quot; / radius 321 mm</span></div>
<div class="b orange l" style="left:0px;top:252px;width:256px;height:18px;"><span class="s" style="transform:scaleX(0.8332)">FRONT and REAR wheel style</span></div>
<div class="b yellow" style="left:0px;top:270px;width:128px;height:18px;"><span class="s c" style="transform:translateX(-50%) scaleX(0.9502)">edit rim</span></div>
<div class="b yellow" style="left:128px;top:270px;width:128px;height:18px;"><span class="s c" style="transform:translateX(-50%) scaleX(0.9426)">edit spoke</span></div>
<div class="b cyan l" style="left:0px;top:288px;width:96px;height:18px;"><span class="s" style="transform:scaleX(0.9037)">Num spokes 1</span></div>
<div class="b gray" style="left:96px;top:288px;width:16px;height:18px;"><span class="s c" style="transform:translateX(-50%) scaleX(0.8337)">–</span></div>
<div class="b gray" style="left:112px;top:288px;width:16px;height:18px;"><span class="s c" style="transform:translateX(-50%) scaleX(0.8794)">+</span></div>
<div class="b cyan l" style="left:128px;top:288px;width:96px;height:18px;"><span class="s" style="transform:scaleX(0.9070)">Rim protector</span></div>
<div class="b gray" style="left:224px;top:288px;width:32px;height:18px;"><span class="s c" style="transform:translateX(-50%) scaleX(0.6667)">NO</span></div>
<div class="b green" style="left:0px;top:306px;width:128px;height:18px;"><span class="s c" style="transform:translateX(-50%) scaleX(0.6966)">LOAD WHL</span></div>
<div class="b green" style="left:128px;top:306px;width:128px;height:18px;"><span class="s c" style="transform:translateX(-50%) scaleX(0.6974)">SAVE WHL</span></div>
<div class="b gray" style="left:0px;top:324px;width:112px;height:18px;"><span class="s c" style="transform:translateX(-50%) scaleX(0.8192)">NO DISC (0 mm)</span></div>
<div class="b gray" style="left:112px;top:324px;width:16px;height:18px;"><span class="s c" style="transform:translateX(-50%) scaleX(0.8337)">–</span></div>
<div class="b gray" style="left:128px;top:324px;width:16px;height:18px;"><span class="s c" style="transform:translateX(-50%) scaleX(0.8794)">+</span></div>
<div class="b gray" style="left:144px;top:324px;width:80px;height:18px;"><span class="s c" style="transform:translateX(-50%) scaleX(0.8580)">Offset 0</span></div>
<div class="b gray" style="left:224px;top:324px;width:16px;height:18px;"><span class="s c" style="transform:translateX(-50%) scaleX(0.8337)">–</span></div>
<div class="b gray" style="left:240px;top:324px;width:16px;height:18px;"><span class="s c" style="transform:translateX(-50%) scaleX(0.8794)">+</span></div>
<div class="b gray" style="left:0px;top:396px;width:112px;height:18px;"><span class="s c" style="transform:translateX(-50%) scaleX(0.8192)">NO DISC (0 mm)</span></div>
<div class="b gray" style="left:112px;top:396px;width:16px;height:18px;"><span class="s c" style="transform:translateX(-50%) scaleX(0.8337)">–</span></div>
<div class="b gray" style="left:128px;top:396px;width:16px;height:18px;"><span class="s c" style="transform:translateX(-50%) scaleX(0.8794)">+</span></div>
<div class="b gray" style="left:144px;top:396px;width:80px;height:18px;"><span class="s c" style="transform:translateX(-50%) scaleX(0.8580)">Offset 0</span></div>
<div class="b gray" style="left:224px;top:396px;width:16px;height:18px;"><span class="s c" style="transform:translateX(-50%) scaleX(0.8337)">–</span></div>
<div class="b gray" style="left:240px;top:396px;width:16px;height:18px;"><span class="s c" style="transform:translateX(-50%) scaleX(0.8794)">+</span></div>
<div class="b yellow l" style="left:0px;top:342px;width:64px;height:18px;"><span class="s" style="transform:scaleX(0.8802)">Visibility</span></div>
<div class="b gray" style="left:64px;top:342px;width:96px;height:18px;"><span class="s c" style="transform:translateX(-50%) scaleX(0.9368)">inside covered</span></div>
<div class="b dgray" style="left:160px;top:342px;width:96px;height:18px;"><span class="s c" style="transform:translateX(-50%) scaleX(0.9404)">open wheel</span></div>
<div class="b yellow l" style="left:0px;top:414px;width:64px;height:18px;"><span class="s" style="transform:scaleX(0.8802)">Visibility</span></div>
<div class="b gray" style="left:64px;top:414px;width:96px;height:18px;"><span class="s c" style="transform:translateX(-50%) scaleX(0.9368)">inside covered</span></div>
<div class="b dgray" style="left:160px;top:414px;width:96px;height:18px;"><span class="s c" style="transform:translateX(-50%) scaleX(0.9404)">open wheel</span></div>
<div class="b orange l" style="left:0px;top:360px;width:112px;height:18px;"><span class="s" style="transform:scaleX(0.8537)">REAR wheel size</span></div>
<div class="b dgray" style="left:112px;top:360px;width:80px;height:18px;"><span class="s c" style="transform:translateX(-50%) scaleX(0.9409)">match front</span></div>
<div class="b gray" style="left:192px;top:360px;width:64px;height:18px;"><span class="s c" style="transform:translateX(-50%) scaleX(0.9230)">different</span></div>
<div class="b orange l" style="left:0px;top:378px;width:112px;height:18px;"><span class="s" style="transform:scaleX(0.8561)">REAR wheel style</span></div>
<div class="b dgray" style="left:112px;top:378px;width:80px;height:18px;"><span class="s c" style="transform:translateX(-50%) scaleX(0.9409)">match front</span></div>
<div class="b gray" style="left:192px;top:378px;width:64px;height:18px;"><span class="s c" style="transform:translateX(-50%) scaleX(0.9230)">different</span></div>
<div class="b blue" style="left:0px;top:624px;width:128px;height:18px;"><span class="s c" style="transform:translateX(-50%) scaleX(0.9375)">default setups</span></div>
<div class="b dgray" style="left:0px;top:642px;width:128px;height:18px;"><span class="s c" style="transform:translateX(-50%) scaleX(0.9938)">[default]</span></div>
<div class="b blue" style="left:0px;top:660px;width:32px;height:18px;"><span class="s c" style="transform:translateX(-50%) scaleX(0.9235)">dup</span></div>
<div class="b red" style="left:32px;top:660px;width:32px;height:18px;"><span class="s c" style="transform:translateX(-50%) scaleX(0.8669)">del</span></div>
<div class="b green" style="left:64px;top:660px;width:32px;height:18px;"><span class="s c" style="transform:translateX(-50%) scaleX(0.9230)">load</span></div>
<div class="b green" style="left:96px;top:660px;width:32px;height:18px;"><span class="s c" style="transform:translateX(-50%) scaleX(0.8790)">save</span></div>
<div class="b blue" style="left:0px;top:714px;width:32px;height:18px;"><span class="s c" style="transform:translateX(-50%) scaleX(0.9235)">dup</span></div>
<div class="b red" style="left:32px;top:714px;width:32px;height:18px;"><span class="s c" style="transform:translateX(-50%) scaleX(0.8669)">del</span></div>
<div class="b green" style="left:64px;top:714px;width:32px;height:18px;"><span class="s c" style="transform:translateX(-50%) scaleX(0.9230)">load</span></div>
<div class="b green" style="left:96px;top:714px;width:32px;height:18px;"><span class="s c" style="transform:translateX(-50%) scaleX(0.8790)">save</span></div>
<div class="b blue" style="left:0px;top:678px;width:128px;height:18px;"><span class="s c" style="transform:translateX(-50%) scaleX(0.9368)">default colours</span></div>
<div class="b dgray" style="left:0px;top:696px;width:41px;height:18px;"><span class="s c" style="transform:translateX(-50%) scaleX(0.8974)">●</span></div>
<div class="b dgray" style="left:41px;top:696px;width:87px;height:18px;"><span class="s c" style="transform:translateX(-50%) scaleX(0.8337)">–</span></div>
<div class="b gray" style="left:0px;top:732px;width:128px;height:18px;"><span class="s c" style="transform:translateX(-50%) scaleX(0.9385)">central driver</span></div>
<div class="b gray" style="left:0px;top:750px;width:160px;height:18px;"><span class="s c" style="transform:translateX(-50%) scaleX(0.8247)">Bavaria 580iC</span></div>
<div class="b bgreen" style="left:160px;top:750px;width:48px;height:18px;"><span class="s c" style="transform:translateX(-50%) scaleX(0.6659)">LOAD</span></div>
<div class="b bgreen" style="left:208px;top:750px;width:48px;height:18px;"><span class="s c" style="transform:translateX(-50%) scaleX(0.6658)">SAVE</span></div>
<div class="b gray" style="left:1110px;top:0px;width:80px;height:18px;"><span class="s c" style="transform:translateX(-50%) scaleX(0.8199)">Skin ID</span></div>
<div class="b gray" style="left:1190px;top:0px;width:80px;height:18px;"><span class="s c" style="transform:translateX(-50%) scaleX(0.6996)">XXX</span></div>
<div class="b blue" style="left:1270px;top:0px;width:96px;height:18px;"><span class="s c" style="transform:translateX(-50%) scaleX(0.9137)">edit engine</span></div>
<div class="b red" style="left:1110px;top:18px;width:256px;height:18px;"><span class="s c" style="transform:translateX(-50%) scaleX(0.8072)">No physics – more than 24 vertices in lowest LOD</span></div>
<div class="b cyan" style="left:1110px;top:36px;width:256px;height:18px;"><span class="s c" style="transform:translateX(-50%) scaleX(0.9065)">CHECK if vehicle is valid for mod export</span></div>
<div class="b cyan" style="left:1110px;top:54px;width:112px;height:18px;"><span class="s c" style="transform:translateX(-50%) scaleX(0.8107)">TEST mod in LFS</span></div>
<div class="b cyan" style="left:1222px;top:54px;width:144px;height:18px;"><span class="s c" style="transform:translateX(-50%) scaleX(0.7806)">EXPORT mod for UPLOAD</span></div>
<div class="b gray" style="left:1110px;top:72px;width:48px;height:18px;"><span class="s c" style="transform:translateX(-50%) scaleX(0.7241)">LFS</span></div>
<div class="b gray" style="left:1158px;top:72px;width:208px;height:18px;"><span class="s c" style="transform:translateX(-50%) scaleX(0.7940)">C:\LFS</span></div>
<div class="b dgray" style="left:1110px;top:90px;width:256px;height:18px;"><span class="s c" style="transform:translateX(-50%) scaleX(0.9018)">export to SHARE vehicle for development</span></div>
<div class="b gray l" style="left:1110px;top:108px;width:224px;height:18px;"><span class="s" style="transform:scaleX(0.9116)">Compressed textures</span></div>
<div class="b gray" style="left:1334px;top:108px;width:32px;height:18px;"><span class="s c" style="transform:translateX(-50%) scaleX(0.6667)">NO</span></div>
<div class="b cyan" style="left:1110px;top:126px;width:128px;height:18px;"><span class="s c" style="transform:translateX(-50%) scaleX(0.8207)">Frame</span></div>
<div class="b gray" style="left:1238px;top:126px;width:96px;height:18px;"><span class="s c" style="transform:translateX(-50%) scaleX(0.9190)">show frame</span></div>
<div class="b red" style="left:1334px;top:126px;width:32px;height:18px;"><span class="s c" style="transform:translateX(-50%) scaleX(0.8669)">del</span></div>
<div class="b gray" style="left:1238px;top:606px;width:96px;height:18px;"><span class="s c" style="transform:translateX(-50%) scaleX(0.9390)">special draw</span></div>
<div class="b gray" style="left:1334px;top:606px;width:32px;height:18px;"><span class="s c" style="transform:translateX(-50%) scaleX(0.6661)">COG</span></div>
<div class="b dblue" style="left:1238px;top:624px;width:64px;height:18px;"><span class="s c" style="transform:translateX(-50%) scaleX(0.9230)">driver</span></div>
<div class="b dblue" style="left:1302px;top:624px;width:64px;height:18px;"><span class="s c" style="transform:translateX(-50%) scaleX(0.9231)">fuel</span></div>
<div class="b green" style="left:1238px;top:642px;width:64px;height:18px;"><span class="s c" style="transform:translateX(-50%) scaleX(0.9454)">load scm</span></div>
<div class="b green" style="left:1302px;top:642px;width:64px;height:18px;"><span class="s c" style="transform:translateX(-50%) scaleX(0.9443)">save scm</span></div>
<div class="b dgreen" style="left:1238px;top:660px;width:16px;height:18px;"><span class="s c" style="transform:translateX(-50%) scaleX(0.6654)">P</span></div>
<div class="b bgreen" style="left:1254px;top:660px;width:16px;height:18px;"><span class="s c" style="transform:translateX(-50%) scaleX(0.9261)">f</span></div>
<div class="b bgreen" style="left:1270px;top:660px;width:16px;height:18px;"><span class="s c" style="transform:translateX(-50%) scaleX(0.9223)">b</span></div>
<div class="b bgreen" style="left:1286px;top:660px;width:16px;height:18px;"><span class="s c" style="transform:translateX(-50%) scaleX(0.9242)">r</span></div>
<div class="b bgreen" style="left:1302px;top:660px;width:16px;height:18px;"><span class="s c" style="transform:translateX(-50%) scaleX(0.9194)">l</span></div>
<div class="b bgreen" style="left:1318px;top:660px;width:16px;height:18px;"><span class="s c" style="transform:translateX(-50%) scaleX(0.9261)">t</span></div>
<div class="b bgreen" style="left:1334px;top:660px;width:16px;height:18px;"><span class="s c" style="transform:translateX(-50%) scaleX(0.9223)">u</span></div>
<div class="b lyellow" style="left:1350px;top:660px;width:16px;height:18px;"><span class="s c" style="transform:translateX(-50%) scaleX(0.8974)">●</span></div>
<div class="b dgray" style="left:1238px;top:678px;width:64px;height:18px;"><span class="s c" style="transform:translateX(-50%) scaleX(0.8337)">–</span></div>
<div class="b dgray" style="left:1302px;top:678px;width:64px;height:18px;"><span class="s c" style="transform:translateX(-50%) scaleX(0.8337)">–</span></div>
<div class="b blue" style="left:1238px;top:696px;width:32px;height:18px;"><span class="s c" style="transform:translateX(-50%) scaleX(0.8353)">0.1m</span></div>
<div class="b dblue" style="left:1270px;top:696px;width:32px;height:18px;"><span class="s c" style="transform:translateX(-50%) scaleX(0.8397)">1m</span></div>
<div class="b blue" style="left:1302px;top:696px;width:32px;height:18px;"><span class="s c" style="transform:translateX(-50%) scaleX(0.8038)">10m</span></div>
<div class="b blue" style="left:1334px;top:696px;width:32px;height:18px;"><span class="s c" style="transform:translateX(-50%) scaleX(0.8337)">–</span></div>
<div class="b cyan" style="left:1238px;top:714px;width:48px;height:18px;"><span class="s c" style="transform:translateX(-50%) scaleX(0.9228)">origin</span></div>
<div class="b cyan" style="left:1286px;top:714px;width:48px;height:18px;"><span class="s c" style="transform:translateX(-50%) scaleX(0.9233)">object</span></div>
<div class="b cyan" style="left:1334px;top:714px;width:32px;height:18px;"><span class="s c" style="transform:translateX(-50%) scaleX(0.9231)">eye</span></div>
<div class="b byellow" style="left:1238px;top:732px;width:32px;height:18px;"><span class="s c" style="transform:translateX(-50%) scaleX(0.9230)">blob</span></div>
<div class="b byellow" style="left:1270px;top:732px;width:16px;height:18px;"><span class="s c" style="transform:translateX(-50%) scaleX(0.8337)">–</span></div>
<div class="b byellow" style="left:1286px;top:732px;width:16px;height:18px;"><span class="s c" style="transform:translateX(-50%) scaleX(0.8794)">+</span></div>
<div class="b byellow" style="left:1302px;top:732px;width:32px;height:18px;"><span class="s c" style="transform:translateX(-50%) scaleX(0.9231)">text</span></div>
<div class="b byellow" style="left:1334px;top:732px;width:16px;height:18px;"><span class="s c" style="transform:translateX(-50%) scaleX(0.8337)">–</span></div>
<div class="b byellow" style="left:1350px;top:732px;width:16px;height:18px;"><span class="s c" style="transform:translateX(-50%) scaleX(0.8794)">+</span></div>
<div class="b blue" style="left:1110px;top:750px;width:64px;height:18px;"><span class="s c" style="transform:translateX(-50%) scaleX(0.8236)">Edit</span></div>
<div class="b blue" style="left:1174px;top:750px;width:64px;height:18px;"><span class="s c" style="transform:translateX(-50%) scaleX(0.8765)">Animate</span></div>
<div class="b green" style="left:1238px;top:750px;width:112px;height:18px;"><span class="s c" style="transform:translateX(-50%) scaleX(0.9366)">reload textures</span></div>
<div class="b gray" style="left:1350px;top:750px;width:16px;height:18px;"><span class="s c" style="transform:translateX(-50%) scaleX(0.8337)">–</span></div>
</body></html>
